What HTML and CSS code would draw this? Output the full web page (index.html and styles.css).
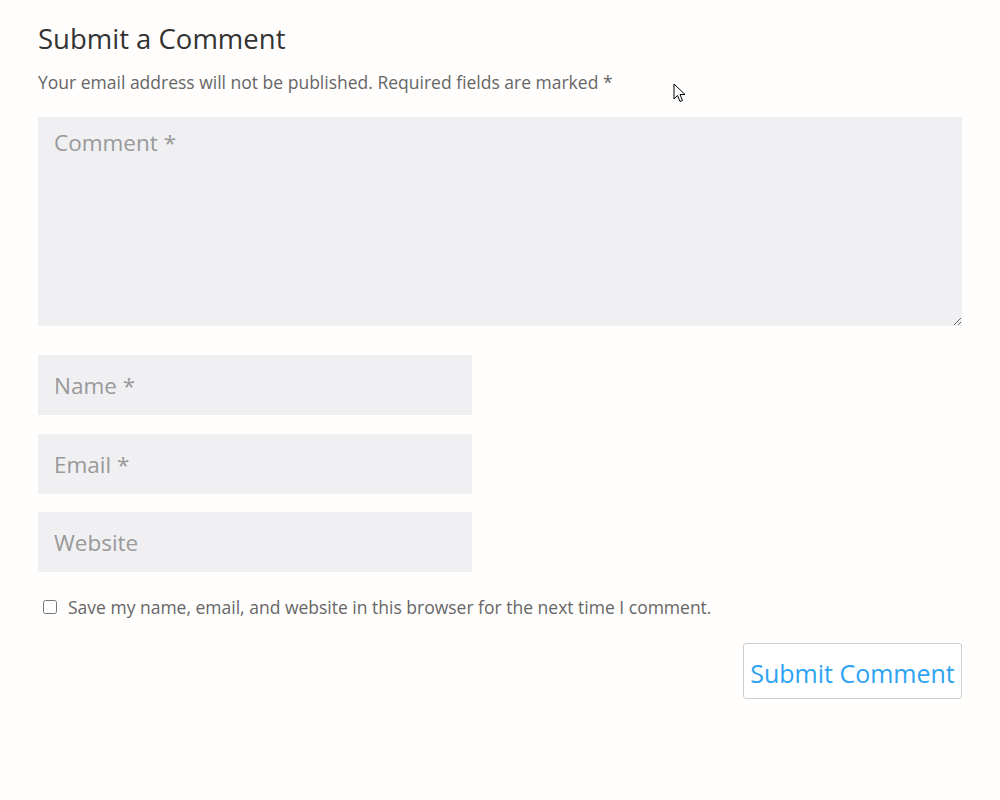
FILE: index.html
```html
<!DOCTYPE html>
<html>
<head>
<meta charset="utf-8">
<link rel="stylesheet" href="styles.css">
</head>
<body>
<div class="respond">
  <h3 class="title">Submit a Comment</h3>
  <p class="notes">Your email address will not be published. Required fields are marked <span>*</span></p>
  <form class="form">
    <textarea class="comment" placeholder="Comment *"></textarea>
    <input class="field name" type="text" placeholder="Name *">
    <input class="field email" type="text" placeholder="Email *">
    <input class="field url" type="text" placeholder="Website">
    <label class="consent"><input type="checkbox" class="check"><span>Save my name, email, and website in this browser for the next time I comment.</span></label>
    <div class="actions"><button type="button" class="submit">Submit Comment</button></div>
  </form>
</div>
<svg class="cursor" width="14" height="21" viewBox="0 0 14 21"><path d="M1 1 L1 16 L4.5 12.5 L7 18.5 L9.5 17.5 L7 11.5 L12 11.5 Z" fill="#fff" stroke="#000" stroke-width="1" stroke-linejoin="miter"/></svg>
</body>
</html>
```
FILE: styles.css
```css
html, body { margin: 0; padding: 0; background: #fffefd; }
body { font-family: "Open Sans", "Liberation Sans", sans-serif; color: #666; }
.respond { padding: 21px 38px 0 38px; }
.title { margin: 0; font-size: 27.5px; font-weight: 500; color: #333; line-height: 36px; }
.notes { margin: 10px 0 0 0; font-size: 17.5px; line-height: 30px; color: #666; }
.form { margin-top: 20px; display: flex; flex-direction: column; }
.comment, .field {
  border: none; background: #f0f0f3; color: #999; font-family: "Open Sans", "Liberation Sans", sans-serif;
  font-size: 22.5px; padding: 16px; box-sizing: border-box; outline: none; margin: 0;
}
.comment { width: 924px; height: 209px; resize: vertical; line-height: 1.2; padding-top: 12px; }
.field { width: 434px; height: 60px; }
.name { margin-top: 29px; }
.email { margin-top: 19px; }
.url { margin-top: 18px; }
::placeholder { color: #999; opacity: 1; }
.consent { margin-top: 22px; display: flex; align-items: center; font-size: 17.5px; color: #666; line-height: 26px; }
.check { margin: 0 11px 0 5px; width: 14px; height: 14px; }
.actions { display: flex; justify-content: flex-end; margin-top: 23px; }
.submit {
  font-family: "Open Sans", "Liberation Sans", sans-serif; font-size: 25px; color: #2ea3f2;
  background: #fff; border: 1px solid #ccc; border-radius: 3px; padding: 3px 6px 0 6px; height: 56px; width: 219px; cursor: pointer;
}
.cursor { position: absolute; left: 673px; top: 83px; }
```
